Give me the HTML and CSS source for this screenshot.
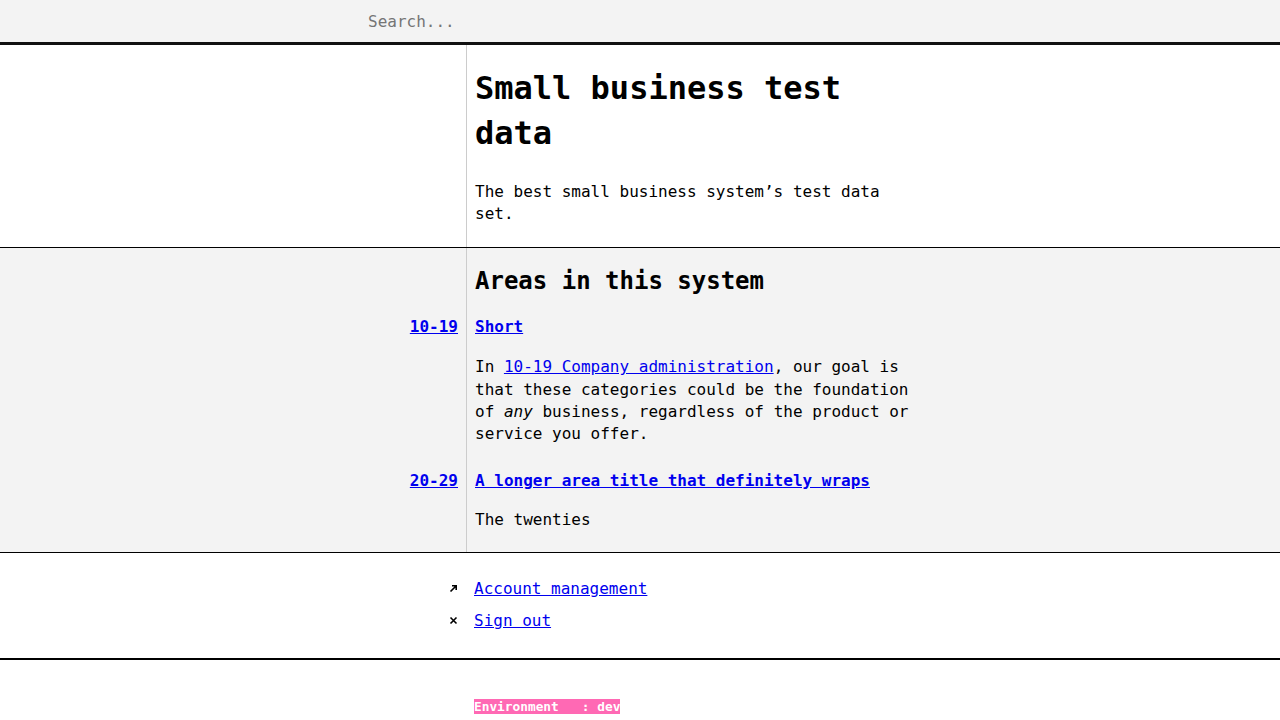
FILE: index.html
```html
<!DOCTYPE html>
<html lang="en">
<head>
<meta charset="utf-8">
<title>Small business test data</title>
<link rel="stylesheet" href="styles.css">
</head>
<body>
<header class="topbar">
  <input class="search" type="text" placeholder="Search...">
</header>
<main>
  <section class="band band-white intro">
    <div class="gutter"></div>
    <div class="content">
      <h1 class="title">Small business test data</h1>
      <p class="lead">The best small business system’s test data set.</p>
    </div>
  </section>
  <section class="band band-grey areas">
    <div class="gutter"></div>
    <div class="content">
      <h2 class="subtitle">Areas in this system</h2>
    </div>
    <div class="gutter label"><a href="#" class="num">10-19</a></div>
    <div class="content">
      <a href="#" class="area-title">Short</a>
      <p class="desc">In <a href="#">10-19 Company administration</a>, our goal is that these categories could be the foundation of <em>any</em> business, regardless of the product or service you offer.</p>
    </div>
    <div class="gutter label label-2"><a href="#" class="num">20-29</a></div>
    <div class="content content-2">
      <a href="#" class="area-title">A longer area title that definitely wraps</a>
      <p class="desc">The twenties</p>
    </div>
  </section>
  <nav class="band nav">
    <ul class="navlist">
      <li class="navitem">
        <span class="icon"><svg width="9" height="9" viewBox="0 0 9 9"><path d="M1.5 7.5 L7 2 M3 1.8 H7.2 V6" fill="none" stroke="#000" stroke-width="1.6"/></svg></span>
        <a href="#">Account management</a>
      </li>
      <li class="navitem">
        <span class="icon"><svg width="9" height="9" viewBox="0 0 9 9"><path d="M1.5 1.5 L7.5 7.5 M7.5 1.5 L1.5 7.5" fill="none" stroke="#000" stroke-width="1.6"/></svg></span>
        <a href="#">Sign out</a>
      </li>
    </ul>
  </nav>
  <footer class="footer">
    <div class="envline"><span class="env">Environment&nbsp;&nbsp;&nbsp;: dev</span></div>
  </footer>
</main>
</body>
</html>
```
FILE: styles.css
```css
html, body {
  margin: 0;
  padding: 0;
  background: #fff;
  color: #000;
  font-family: "DejaVu Sans Mono", "Liberation Mono", monospace;
  font-size: 16px;
  line-height: 1.4;
}
a { color: #0000ee; }
.topbar {
  height: 42px;
  background: #f3f3f3;
  border-bottom: 3px solid #111;
  display: flex;
  align-items: center;
  padding-left: 368px;
}
.search {
  border: none;
  background: transparent;
  font-family: inherit;
  font-size: 16px;
  padding: 0;
  width: 600px;
  outline: none;
  color: #000;
}
.search::placeholder { color: #757575; }
.band {
  display: grid;
  grid-template-columns: 467px 1fr;
}
.band-white { border-bottom: 1px solid #000; }
.band-grey { background: #f3f3f3; border-bottom: 1px solid #000; }
.gutter {
  border-right: 1px solid #ccc;
  padding-right: 8px;
  text-align: right;
}
.content {
  padding-left: 8px;
  max-width: 434px;
}
.intro .content { padding-top: 21px; padding-bottom: 21px; }
.title {
  font-size: 32px;
  line-height: 45px;
  margin: 0 0 25px;
  font-weight: bold;
}
.lead { margin: 0; }
.subtitle {
  font-size: 24px;
  line-height: 34px;
  margin: 16px 0 18px;
  font-weight: bold;
}
.label { padding-top: 0; }
.num { font-weight: bold; }
.area-title { font-weight: bold; display: inline-block; }
.desc { margin: 18px 0 0; }
.label-2, .content-2 { padding-top: 24px; }
.content-2 { padding-bottom: 20px; }
.content-2 .desc { margin-top: 17px; }
.nav {
  display: block;
  border-bottom: 2px solid #000;
  padding: 25px 0 26px;
}
.navlist {
  list-style: none;
  margin: 0;
  padding: 0;
  display: flex;
  flex-direction: column;
  gap: 9.6px;
}
.navitem {
  display: flex;
  align-items: center;
  padding-left: 449px;
}
.icon {
  width: 25px;
  display: flex;
  align-items: center;
}
.footer {
  padding: 39px 0 0 474px;
  height: 59px;
}
.envline { font-size: 12.8px; line-height: 16px; }
.env {
  background: #ff69b4;
  color: #fff;
  font-weight: bold;
  white-space: pre;
}
```
